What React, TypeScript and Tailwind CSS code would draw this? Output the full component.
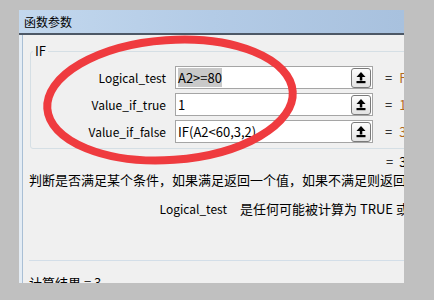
import React from "react"

const FONT = "font-['Noto_Sans_CJK_SC',_'Noto_Sans',_sans-serif]"

interface Arg {
  name: string
  value: string
  result: string
  selected?: boolean
}

const ARGS: Arg[] = [
  { name: "Logical_test", value: "A2>=80", result: "FALSE", selected: true },
  { name: "Value_if_true", value: "1", result: "1" },
  { name: "Value_if_false", value: "IF(A2<60,3,2)", result: "3" },
]

function CollapseButton() {
  return (
    <div className="h-[20px] w-[20px] shrink-0 rounded-[3px] border border-[#7a7a7a] bg-gradient-to-b from-[#fdfdfd] to-[#e3e3e3]">
      <svg width="18" height="18" viewBox="0 0 18 18">
        <polygon points="9,3 4.5,8 13.5,8" fill="#000" />
        <rect x="7.8" y="7.5" width="2.5" height="4" fill="#000" />
        <rect x="4.5" y="12" width="9" height="2.2" fill="#000" />
      </svg>
    </div>
  )
}

function ArgRow({ arg }: { arg: Arg }) {
  return (
    <div className="flex h-[23px] items-center">
      <div className="w-[135px] text-right text-[12px] text-black">{arg.name}</div>
      <div className="ml-[9px] flex h-[23px] w-[198px] items-center border border-[#a5a5a5] bg-white">
        <div className="flex-1 pl-[2px] text-[13px] leading-[18px] text-black">
          <span className={arg.selected ? "bg-[#c9c9c9]" : ""}>{arg.value}</span>
        </div>
        <CollapseButton />
        <div className="w-[1px]" />
      </div>
      <span className="ml-[12px] text-[13px] text-black">=</span>
      <span className="ml-[7px] whitespace-nowrap text-[13px] text-[#b06a1e]">{arg.result}</span>
    </div>
  )
}

export default function App() {
  return (
    <div className={`relative h-[300px] w-[434px] overflow-hidden bg-[#c0c0c0] pl-[19px] pt-[10px] ${FONT}`}>
      <div className="flex h-[273px] w-[385px] flex-col overflow-hidden bg-[#f0f0f0]">
        <div className="flex h-[25px] shrink-0 items-center border-b-2 border-[#4d5866] bg-gradient-to-r from-[#c3d8ee] via-[#b3cbe6] to-[#a8c1de] pl-[5px] text-[12px] text-black">
          函数参数
        </div>
        <div className="flex flex-1 border-l-[3px] border-[#e4ecf4]">
          <div className="flex-1 border-l border-[#a9bfd5]">
            <div className="relative ml-[7px] mt-[16px] h-[98px] w-[420px] rounded-[3px] border border-[#d5dfe5]">
              <span className="absolute left-[2px] top-[-9px] bg-[#f0f0f0] px-[2px] text-[13px] leading-[16px] text-black">
                IF
              </span>
              <div className="flex flex-col gap-[4px] pt-[14px]">
                {ARGS.map((a) => (
                  <ArgRow key={a.name} arg={a} />
                ))}
              </div>
            </div>
            <div className="mt-[4px] h-[18px] pl-[363px] text-[13px] leading-[18px] text-black">
              = <span className="ml-[3px]">3</span>
            </div>
            <div className="h-[18px] whitespace-nowrap pl-[6px] text-[13px] leading-[18px] text-black">
              判断是否满足某个条件，如果满足返回一个值，如果不满足则返回另一个值。
            </div>
            <div className="mt-[11px] flex h-[18px] whitespace-nowrap text-[13px] leading-[18px] text-black">
              <div className="w-[204px] text-right text-[12px]">Logical_test</div>
              <div className="ml-[13px]">是任何可能被计算为 TRUE 或 FALSE 的数值或表达式。</div>
            </div>
            <div className="ml-[6px] mt-[42px] h-[1px] bg-[#d3dee8]" />
            <div className="mt-[13px] pl-[6px] text-[13px] leading-[18px] text-black">计算结果 = 3</div>
          </div>
        </div>
      </div>
      <svg className="pointer-events-none absolute left-0 top-0" width="434" height="300" viewBox="0 0 434 300">
        <ellipse cx="170" cy="100" rx="123" ry="60" fill="none" stroke="#ef3b3f" strokeWidth="8" transform="rotate(-4 170 100)" />
      </svg>
    </div>
  )
}
